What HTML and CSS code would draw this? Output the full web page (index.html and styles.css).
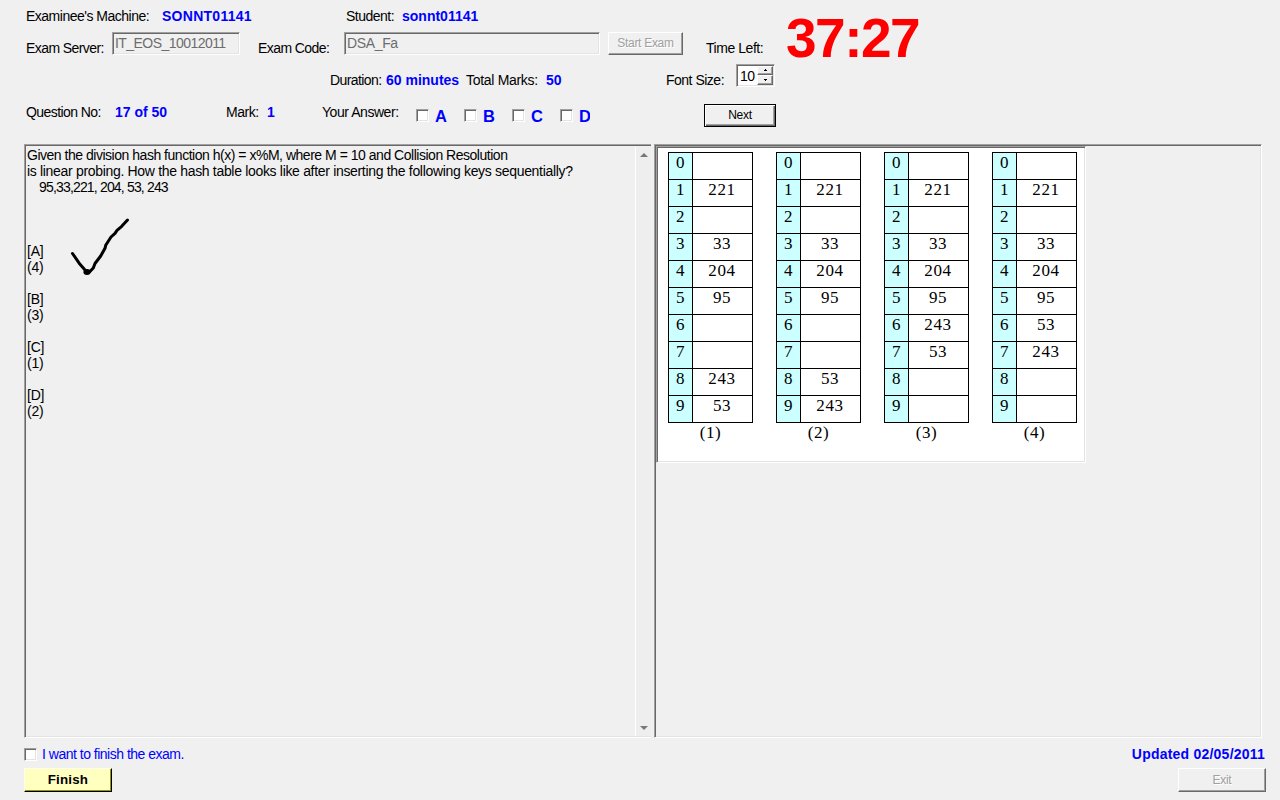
FILE: index.html
```html
<!DOCTYPE html>
<html lang="en">
<head>
<meta charset="utf-8">
<title>Exam</title>
<link rel="stylesheet" href="styles.css">
</head>
<body>
<div class="app">
  <header class="header">
    <div class="row row-machine">
      <span class="label">Examinee's Machine:</span><b class="machine">SONNT01141</b>
      <span class="label">Student:</span><b>sonnt01141</b>
    </div>
    <div class="row row-server">
      <span class="label tight">Exam Server:</span><div class="field field-server">IT_EOS_10012011</div>
      <span class="label tight">Exam Code:</span><div class="field field-code">DSA_Fa</div>
      <button class="button start" disabled>Start Exam</button>
      <span class="label loose">Time Left:</span><b class="timer">37:27</b>
    </div>
    <div class="row row-duration">
      <span class="label tight">Duration:</span><b>60 minutes</b>
      <span class="label total">Total Marks:</span><b>50</b>
      <span class="label">Font Size:</span>
      <div class="spinner"><span class="value">10</span><div class="arrows">
        <i><svg width="5" height="3"><path d="M2 0h1v1h1v1H1V1h1z"/></svg></i>
        <i><svg width="5" height="3"><path d="M1 0h3v1H3v1H2V1H1z"/></svg></i>
      </div></div>
    </div>
    <div class="row row-question">
      <span class="label tight">Question No:</span><b>17 of 50</b>
      <span class="label loose">Mark:</span><b>1</b>
      <span class="label loose">Your Answer:</span>
      <div class="answers">
        <label><i class="check"></i><b>A</b></label>
        <label><i class="check"></i><b>B</b></label>
        <label><i class="check"></i><b>C</b></label>
        <label><i class="check"></i><b class="cut">D</b></label>
      </div>
      <button class="button next">Next</button>
    </div>
  </header>

  <main class="panels">
    <section class="question">
      <div class="text">
        <p class="q1">Given the division hash function h(x) = x%M, where M = 10 and Collision Resolution</p>
        <p class="q2">is linear probing. How the hash table looks like after inserting the following keys sequentially?</p>
        <p class="keys">95,33,221, 204, 53, 243</p>
        <div class="option first"><p>[A]</p><p>(4)</p></div>
        <div class="option"><p>[B]</p><p>(3)</p></div>
        <div class="option"><p>[C]</p><p>(1)</p></div>
        <div class="option"><p>[D]</p><p>(2)</p></div>
        <svg class="tick" width="64" height="62" viewBox="68 216 64 62"><path d="M72.500 253.500L80 264.300 85.700 270.700 89.500 272 93.300 268 95 263.500 100.700 256 105 248.300 105.700 245.300 111 237 115 233.300 117 230.300 121.700 226.300 127.500 220"/><ellipse cx="87" cy="272" rx="3.600" ry="3"/></svg>
      </div>
      <div class="scroll">
        <svg width="8" height="4"><path d="M4 0l4 4H0z"/></svg>
        <svg width="8" height="4"><path d="M0 0h8L4 4z"/></svg>
      </div>
    </section>
    <section class="picture">
      <div class="figure">
        <div class="hash"><table>
          <tr><th>0</th><td></td></tr><tr><th>1</th><td>221</td></tr><tr><th>2</th><td></td></tr><tr><th>3</th><td>33</td></tr><tr><th>4</th><td>204</td></tr><tr><th>5</th><td>95</td></tr><tr><th>6</th><td></td></tr><tr><th>7</th><td></td></tr><tr><th>8</th><td>243</td></tr><tr><th>9</th><td>53</td></tr>
        </table><p>(1)</p></div>
        <div class="hash"><table>
          <tr><th>0</th><td></td></tr><tr><th>1</th><td>221</td></tr><tr><th>2</th><td></td></tr><tr><th>3</th><td>33</td></tr><tr><th>4</th><td>204</td></tr><tr><th>5</th><td>95</td></tr><tr><th>6</th><td></td></tr><tr><th>7</th><td></td></tr><tr><th>8</th><td>53</td></tr><tr><th>9</th><td>243</td></tr>
        </table><p>(2)</p></div>
        <div class="hash"><table>
          <tr><th>0</th><td></td></tr><tr><th>1</th><td>221</td></tr><tr><th>2</th><td></td></tr><tr><th>3</th><td>33</td></tr><tr><th>4</th><td>204</td></tr><tr><th>5</th><td>95</td></tr><tr><th>6</th><td>243</td></tr><tr><th>7</th><td>53</td></tr><tr><th>8</th><td></td></tr><tr><th>9</th><td></td></tr>
        </table><p>(3)</p></div>
        <div class="hash"><table>
          <tr><th>0</th><td></td></tr><tr><th>1</th><td>221</td></tr><tr><th>2</th><td></td></tr><tr><th>3</th><td>33</td></tr><tr><th>4</th><td>204</td></tr><tr><th>5</th><td>95</td></tr><tr><th>6</th><td>53</td></tr><tr><th>7</th><td>243</td></tr><tr><th>8</th><td></td></tr><tr><th>9</th><td></td></tr>
        </table><p>(4)</p></div>
      </div>
    </section>
  </main>

  <footer class="footer">
    <div class="left">
      <label class="confirm"><i class="check"></i><span class="label">I want to finish the exam.</span></label>
      <button class="button finish">Finish</button>
    </div>
    <div class="right">
      <b class="updated">Updated 02/05/2011</b>
      <button class="button exit" disabled>Exit</button>
    </div>
  </footer>
</div>
</body>
</html>
```
FILE: styles.css
```css
* { box-sizing: border-box; }
body { margin: 0; background: #f0f0f0; font: 14px/16px "Liberation Sans", Arial, sans-serif; color: #000; }
p { margin: 0; white-space: pre; }
i { display: block; font-style: normal; }
.app { width: 1280px; height: 800px; overflow: hidden; display: flex; flex-direction: column; }

.header { height: 144px; }
.row { display: grid; height: 32px; padding-left: 26px; align-items: center; white-space: nowrap; justify-items: start; }
.row b, .updated { color: #00f; }
.row-machine { grid-template-columns: 136px 184px 56px auto; }
.row-server { grid-template-columns: 86px 146px 86px 264px 98px 80px 1fr; }
.row-duration { grid-template-columns: 56px 80px 80px 120px 70px auto; padding-left: 330px; }
.row-question { grid-template-columns: 89px 111px 41px 55px 94px 288px auto; }
.label { letter-spacing: -.5px; }
.label.tight { letter-spacing: -.58px; }
.label.loose { letter-spacing: -.45px; }
.label.total { letter-spacing: -.3px; }
.machine { letter-spacing: .27px; }

.field { align-self: start; height: 23px; border: 1px solid; border-color: #a0a0a0 #fff #fff #a0a0a0; box-shadow: inset 1px 1px #696969, inset -1px -1px #e3e3e3; color: #6d6d6d; padding: 2px 0 0 2px; }
.field-server { width: 128px; letter-spacing: -.55px; }
.field-code { width: 256px; letter-spacing: -.35px; }

.button { font: 12px/14px "Liberation Sans", Arial, sans-serif; letter-spacing: -.3px; padding: 0 0 1px; color: #000; background: #f0f0f0; border: 1px solid; border-color: #fff #696969 #696969 #fff; box-shadow: inset -1px -1px #a0a0a0; }
.button:disabled { color: #a0a0a0; text-shadow: 1px 1px #fff; }
.start { width: 75px; height: 23px; align-self: start; }
.next { width: 72px; height: 23px; margin-top: 7px; border: 1px solid #000; box-shadow: inset 1px 1px #fff, inset -1px -1px #696969, inset -2px -2px #a0a0a0; padding-bottom: 2px; }
.row .timer { color: #f00; font-size: 55px; line-height: 32px; letter-spacing: -1.5px; margin-top: -21px; }

.spinner { display: flex; align-self: start; width: 39px; height: 23px; border: 1px solid; border-color: #a0a0a0 #fff #fff #a0a0a0; box-shadow: inset 1px 1px #696969, inset -1px -1px #e3e3e3; background: #fff; padding: 1px; }
.value { width: 20px; padding: 2px 0 0 2px; letter-spacing: -.6px; }
.arrows i { display: flex; align-items: center; justify-content: center; width: 16px; height: 9px; background: #f0f0f0; border: 1px solid; border-color: #fff #696969 #696969 #fff; box-shadow: inset -1px -1px #a0a0a0; }
.arrows i + i { height: 10px; }

.answers { display: flex; padding-top: 7px; }
.answers label { display: flex; align-items: center; width: 48px; }
.answers b { font-size: 16.5px; line-height: 18px; margin-left: 6px; }
.answers .cut { width: 11px; overflow: hidden; }
.check { width: 13px; height: 13px; background: #fff; border: 1px solid; border-color: #a0a0a0 #fff #fff #a0a0a0; box-shadow: inset 1px 1px #696969, inset -1px -1px #e3e3e3; }

.panels { display: flex; gap: 3px; height: 594px; padding-left: 24px; }
.question, .picture { border: 1px solid; border-color: #a0a0a0 #fff #fff #a0a0a0; box-shadow: inset 1px 1px #696969, inset 0 -1px #e3e3e3; }
.question { display: flex; justify-content: space-between; width: 627px; border-right: 0; }
.picture { width: 608px; padding: 1px; box-shadow: inset 1px 1px #696969, inset -1px -1px #e3e3e3; }
.text { position: relative; padding: 2px 0 0 2px; }
.q1 { letter-spacing: -.48px; }
.q2 { letter-spacing: -.32px; }
.keys { padding-left: 12px; letter-spacing: -.83px; }
.option { margin-top: 16px; letter-spacing: -.2px; }
.option.first { margin-top: 48px; }
.tick { position: absolute; left: 43px; top: 71px; }
.tick path { fill: none; stroke: #000; stroke-width: 3; stroke-linecap: round; stroke-linejoin: round; }
.scroll { display: flex; flex-direction: column; justify-content: space-between; align-items: center; width: 16px; margin: 2px 0 1px; padding: 6px 0; border-left: 1px solid #fff; background: #eee; }
.scroll path { fill: #777; }

.figure { display: flex; gap: 23px; width: 430px; height: 317px; background: #fff; border: 1px solid; border-color: #a0a0a0 #fff #fff #a0a0a0; box-shadow: inset 1px 1px #696969, inset -1px -1px #e3e3e3; padding: 5px 0 0 11px; font: 17px/19px "Liberation Serif", serif; letter-spacing: .6px; text-align: center; }
.hash { width: 85px; }
.hash table { border-collapse: collapse; table-layout: fixed; width: 85px; }
.hash th, .hash td { height: 27px; border: 1px solid #000; padding: 0 0 7px; font-weight: normal; }
.hash th { width: 24px; background: #cff; }
.hash td { width: 60px; padding-right: 1px; }
.hash p { margin-top: 0; }

.footer { display: flex; justify-content: space-between; padding: 8px 14px 0 24px; }
.left, .right { display: flex; flex-direction: column; }
.right { align-items: flex-end; }
.confirm { display: flex; align-items: center; gap: 5px; height: 16px; color: #00f; }
.updated { height: 16px; margin-right: 1px; letter-spacing: .22px; }
.finish, .exit { width: 88px; height: 24px; margin-top: 6px; }
.exit { padding: 0; }
.finish { background: #ffffc0; font-size: 13.33px; font-weight: bold; letter-spacing: .2px; padding: 0; border-color: #ffffe8 #000 #000 #ffffe8; box-shadow: inset -1px -1px #969600; }
```
